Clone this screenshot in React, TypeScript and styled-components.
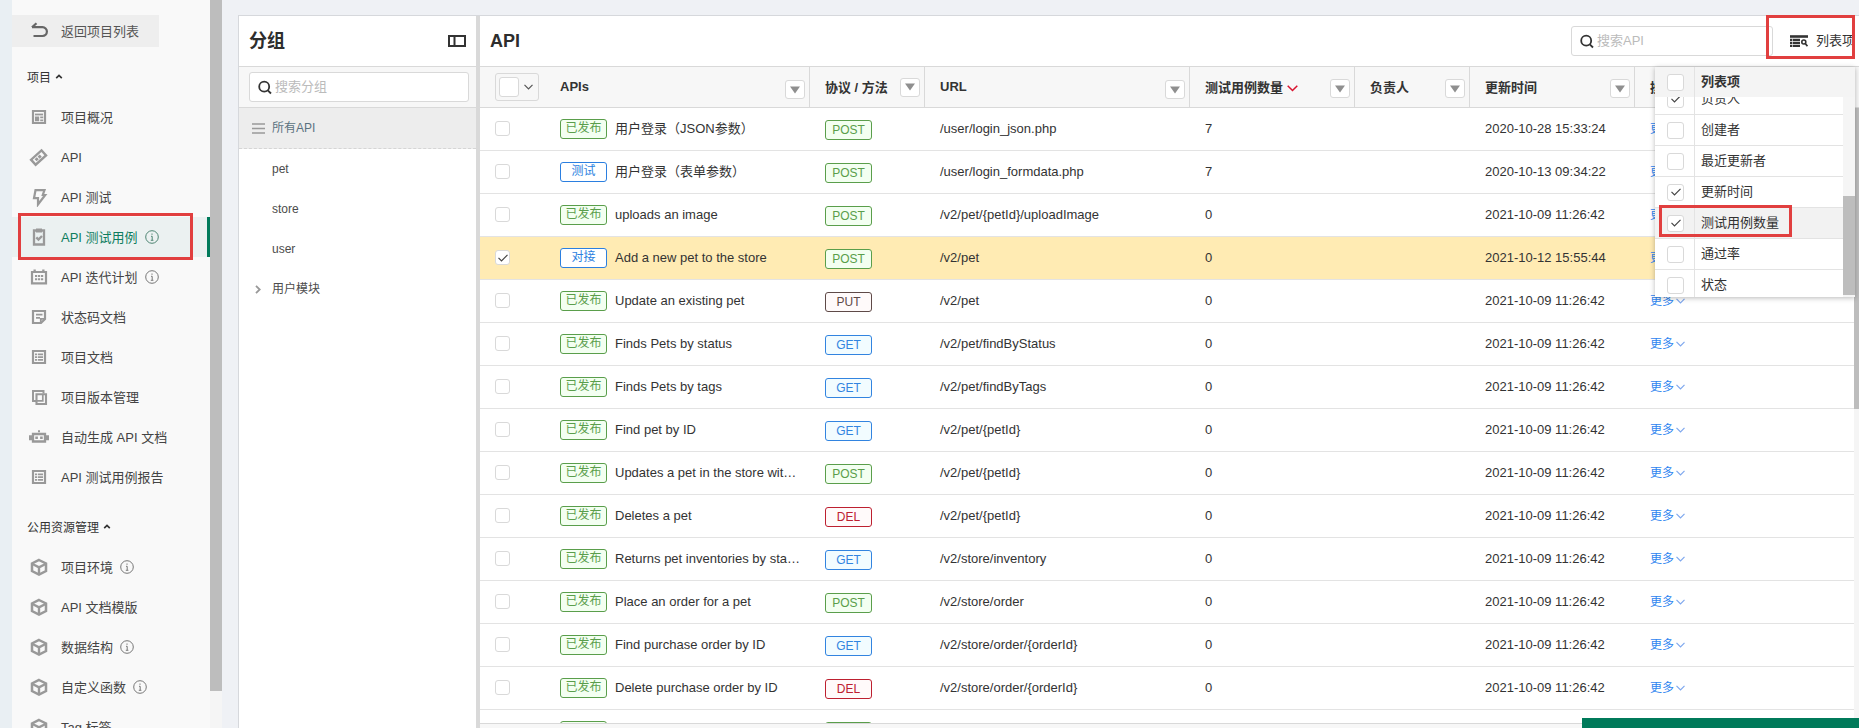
import React from "react";
import styled, { createGlobalStyle, css } from "styled-components";

const GlobalStyle = createGlobalStyle`
  *, *::before, *::after { box-sizing: border-box; }
  body {
    margin: 0;
    background: #eff1f5;
    color: #333;
    font: 13px/20px "Liberation Sans", "Noto Sans CJK SC", sans-serif;
  }
`;

/* ---------- shell ---------- */

const Shell = styled.div`
  position: relative;
  display: flex;
  width: 1859px;
  height: 728px;
  overflow: hidden;
`;

const Rail = styled.div`
  flex: 0 0 12px;
  background: #e9eff3;
`;

const Sidebar = styled.nav`
  flex: 0 0 198px;
  height: 728px;
  overflow: hidden;
  background: #f9f9f9;
  padding-top: 15px;
`;

const SidebarTrack = styled.div`
  flex: 0 0 12px;
  background: #f5f5f5;
`;

const SidebarThumb = styled.div`
  height: 691px;
  background: #bdbdbd;
`;

const Workspace = styled.div`
  flex: 1;
  min-width: 0;
  display: flex;
  margin: 15px 0 0 16px;
  border-top: 1px solid #d6d8dc;
  border-left: 1px solid #d6d8dc;
  background: #fff;
`;

/* ---------- sidebar ---------- */

const BackButton = styled.div`
  display: flex;
  align-items: center;
  width: 147px;
  height: 32px;
  margin-bottom: 10px;
  padding: 1px 0 0 18px;
  background: #eeeeee;
  color: #555;
`;

const SectionTitle = styled.div<{ $spaced?: boolean }>`
  display: flex;
  align-items: center;
  gap: 4px;
  height: 40px;
  padding: 1px 0 0 15px;
  margin-top: ${(p) => (p.$spaced ? 10 : 0)}px;
  font-size: 12px;

  svg {
    margin-top: -3px;
  }
`;

const NavIcon = styled.span<{ $dark?: boolean }>`
  display: flex;
  justify-content: center;
  flex: 0 0 22px;
  margin: -1px 11px 0 -2px;
  color: ${(p) => (p.$dark ? "#666" : "#999")};
`;

const NavItem = styled.div<{ $active?: boolean }>`
  display: flex;
  align-items: center;
  height: 40px;
  padding: 1px 0 0 18px;
  color: #444;
  ${(p) =>
    p.$active &&
    css`
      background: #ebf1f1;
      border-right: 3px solid #007a5a;
      color: #0f7d5f;
    `}
`;

const InfoSlot = styled.span<{ $active?: boolean }>`
  display: flex;
  margin: -2px 0 0 7px;
  color: ${(p) => (p.$active ? "#4f8573" : "#777")};
`;

/* ---------- group panel ---------- */

const GroupPanel = styled.section`
  flex: 0 0 237px;
`;

const PanelHeader = styled.header`
  display: flex;
  align-items: center;
  justify-content: space-between;
  height: 51px;
  padding: 0 10px;
  border-bottom: 1px solid #d9d9d9;
`;

const PanelTitle = styled.h1`
  margin: 0;
  font-size: 18px;
  font-weight: bold;
  line-height: 24px;
  color: #2d2d2d;
`;

const GroupSearchBar = styled.div`
  display: flex;
  align-items: center;
  height: 41px;
  padding: 0 7px 0 10px;
  background: #f7f7f7;
  border-bottom: 1px solid #d9d9d9;
`;

const SearchBox = styled.div<{ $width?: number }>`
  display: flex;
  align-items: center;
  gap: 3px;
  width: ${(p) => (p.$width ? `${p.$width}px` : "100%")};
  height: 30px;
  padding-left: 8px;
  border: 1px solid #d9d9d9;
  border-radius: 3px;
  background: #fff;
  color: #bbb;
`;

const GroupRow = styled.div<{ $selected?: boolean }>`
  display: flex;
  align-items: center;
  height: ${(p) => (p.$selected ? 41 : 40)}px;
  padding-left: 11px;
  font-size: 12px;
  color: #4c4c4c;
  ${(p) =>
    p.$selected &&
    css`
      background: #ededed;
      border-bottom: 1px dashed #d5d5d5;
      color: #5b7280;
    `}
`;

const GroupMark = styled.span`
  display: flex;
  justify-content: center;
  width: 16px;
  margin-right: 6px;
`;

const Divider = styled.div`
  flex: 0 0 4px;
  background: #d9d9d9;
`;

/* ---------- main panel ---------- */

const MainPanel = styled.section`
  flex: 1;
  min-width: 0;
  display: flex;
  flex-direction: column;
`;

const Tools = styled.div`
  display: flex;
  align-items: center;
  margin-right: -10px;
  gap: 17px;
`;

const ColumnsButton = styled.div`
  display: flex;
  align-items: center;
  gap: 8px;
  width: 69px;
  white-space: nowrap;
`;

const columns = css`
  display: grid;
  grid-template-columns: 65px 265px 115px 265px 165px 115px 165px 1fr;
`;

const TableHead = styled.div`
  ${columns}
  height: 41px;
  background: #f7f7f7;
  border-bottom: 1px solid #d9d9d9;
`;

const HeadCell = styled.div<{ $line?: boolean; $drop?: number }>`
  display: flex;
  align-items: center;
  padding: ${(p) => p.$drop ?? 0}px 4px 0 15px;
  border-right: ${(p) => (p.$line ? "1px solid #d9d9d9" : "0")};
  font-weight: bold;
  color: #333;
  white-space: nowrap;
`;

const FilterButton = styled.span<{ $shift: number }>`
  display: flex;
  align-items: center;
  justify-content: center;
  width: 20px;
  height: 19px;
  margin: ${(p) => p.$shift}px 0 0 auto;
  border: 1px solid #d9d9d9;
  border-radius: 3px;
  background: #fff;
`;

const SelectAll = styled.span`
  display: flex;
  align-items: center;
  flex: 0 0 44px;
  gap: 5px;
  height: 28px;
  padding-left: 3px;
  border: 1px solid #d9d9d9;
  border-radius: 3px;
`;

const Check = styled.span<{ $size: number }>`
  display: flex;
  align-items: center;
  justify-content: center;
  flex: none;
  width: ${(p) => p.$size}px;
  height: ${(p) => p.$size}px;
  border: 1px solid #d9d9d9;
  border-radius: 3px;
  background: #fff;
`;

const TableArea = styled.div`
  display: flex;
  height: 616px;
  overflow: hidden;
  border-bottom: 1px solid #d9d9d9;
`;

const TableBody = styled.div`
  flex: 1;
  min-width: 0;
`;

const BodyTrack = styled.div`
  flex: 0 0 5px;
  background: #f5f5f5;
`;

const BodyThumb = styled.div`
  height: 301px;
  background: #bdbdbd;
`;

const Row = styled.div<{ $selected?: boolean }>`
  ${columns}
  height: 43px;
  border-bottom: 1px solid #e3e3e3;
  background: ${(p) => (p.$selected ? "#ffebb3" : "#fff")};
`;

const Cell = styled.div<{ $drop?: number }>`
  display: flex;
  align-items: center;
  min-width: 0;
  padding: ${(p) => p.$drop ?? 0}px 8px 1px 15px;
  white-space: nowrap;
`;

const Name = styled.span`
  margin-left: 8px;
`;

const tones = {
  green: ["#5a9e4b", "#f3fff1"],
  blue: ["#3284e0", "#f2fcff"],
  plainBlue: ["#2b7fe0", "#ffffff"],
  red: ["#bd2030", "#fffafa"],
  brown: ["#5f4a48", "#fffafa"],
};

type Tone = keyof typeof tones;

const Tag = styled.span<{ $tone: Tone; $method?: boolean }>`
  flex: 0 0 47px;
  height: 20px;
  border: 1px solid ${(p) => tones[p.$tone][0]};
  border-radius: 3px;
  background: ${(p) => tones[p.$tone][1]};
  color: ${(p) => tones[p.$tone][0]};
  font-size: 12px;
  line-height: ${(p) => (p.$method ? 19 : 17)}px;
  text-align: center;
`;

const More = styled.span`
  display: flex;
  align-items: center;
  gap: 2px;
  font-size: 12px;
  color: #2f86f0;
`;

const TableFooter = styled.div`
  flex: 1;
  background: #f7f7f7;
`;

/* ---------- floating layers ---------- */

const ColumnMenu = styled.div`
  position: absolute;
  left: 1655px;
  top: 67px;
  width: 200px;
  height: 230px;
  background: #fff;
  box-shadow: 0 1px 5px rgba(0, 0, 0, 0.28);
`;

const MenuRow = styled.div<{ $tint?: boolean }>`
  display: grid;
  grid-template-columns: 40px 1fr;
  height: 31px;
  border-bottom: 1px solid #e3e3e3;
  background: ${(p) => (p.$tint ? "#f2f2f2" : "#fff")};
`;

const MenuHeader = styled(MenuRow)`
  height: 30px;
  border: 0;
  background: #f4f4f4;
  font-weight: bold;
`;

const MenuCell = styled.div<{ $mark?: boolean }>`
  display: flex;
  align-items: center;
  padding-left: ${(p) => (p.$mark ? 12 : 6)}px;
  border-right: ${(p) => (p.$mark ? "1px solid #e3e3e3" : "0")};
`;

const MenuScroll = styled.div`
  display: flex;
  height: 200px;
  overflow: hidden;
`;

const MenuList = styled.div`
  flex: 1;
  margin-top: -13px;
`;

const MenuTrack = styled.div`
  flex: 0 0 12px;
  padding-top: 99px;
  background: #f5f5f5;
`;

const MenuThumb = styled.div`
  height: 99px;
  background: #bdbdbd;
`;

const Highlight = styled.div<{ $x: number; $y: number; $w: number; $h: number }>`
  position: absolute;
  left: ${(p) => p.$x}px;
  top: ${(p) => p.$y}px;
  width: ${(p) => p.$w}px;
  height: ${(p) => p.$h}px;
  border: 3px solid #e13f3f;
`;

const HelpBar = styled.div`
  position: absolute;
  right: 0;
  bottom: 0;
  width: 277px;
  height: 10px;
  background: #007a5a;
`;

/* ---------- icons ---------- */

const Svg = ({ w = 20, h = 20, children }: { w?: number; h?: number; children: React.ReactNode }) => (
  <svg width={w} height={h} viewBox={`0 0 ${w} ${h}`} fill="none" stroke="currentColor" strokeWidth={2}>
    {children}
  </svg>
);

const icons = {
  back: (
    <Svg>
      <path d="M3 6.200h10.500a4.400 4.400 0 0 1 0 8.800H4.500" strokeWidth={2.200} />
      <path d="M7.500 2.200 3 6.200" strokeWidth={2.200} />
    </Svg>
  ),
  overview: (
    <Svg>
      <path d="M4 4h12v12H4z" strokeWidth={2.200} />
      <path d="M6 7.500h8" strokeWidth={1.800} />
      <path d="M6 9.500h4.200v4.700H6zM11.200 9.500h3v1.800h-3zM11.200 12.400h3v1.800h-3z" fill="currentColor" stroke="none" />
    </Svg>
  ),
  api: (
    <Svg>
      <g transform="rotate(-42 9.500 10.500)">
        <path d="M2.500 7.200h14v6.800h-14z" strokeWidth={2.400} />
        <path d="M5.500 10.600h4M9.500 10.600h4" strokeWidth={3} strokeDasharray="3 1" />
      </g>
    </Svg>
  ),
  test: (
    <Svg>
      <path d="M6.500 3.200h9l-1.700 4.800h2.400L9 17.500V11.200H5z" strokeWidth={2.200} />
    </Svg>
  ),
  testcase: (
    <Svg>
      <path d="M5 3.500h10v14H5z" strokeWidth={2.300} />
      <path d="M7 1.500h6v4H7z" fill="currentColor" stroke="none" />
      <path d="m7.300 10.300 2.200 2.200 3.500-3.500" strokeWidth={2.400} />
    </Svg>
  ),
  plan: (
    <Svg>
      <path d="M3 5h14v11.300H3z" strokeWidth={2.200} />
      <path d="M4.500 3.300h2.300M13.200 3.300h2.300" strokeWidth={1.600} />
      <path d="M6 9h2.200M9 9h2.200M12 9h2.200M6 12.200h2.200M9 12.200h2.200M12 12.200h2.200" />
    </Svg>
  ),
  note: (
    <Svg>
      <path d="M4 4h12v8l-4 4H4z" strokeWidth={2.200} />
      <path d="M7 7.700h6.500M7 10.800h4M11.800 16v-4.200H16" strokeWidth={1.800} />
    </Svg>
  ),
  doc: (
    <Svg>
      <path d="M4 4h12v12H4z" strokeWidth={2.200} />
      <path d="M6 7.300h2M8.800 7.300H14M6 10.100h2M8.800 10.100H14M6 12.900h2M8.800 12.900H14" strokeWidth={1.700} />
    </Svg>
  ),
  version: (
    <Svg>
      <path d="M7 14H4V4h10.500v2.500" />
      <path d="M7.500 7.200H17V17H7.500z" strokeWidth={2.100} />
      <path d="M13.800 8v5.800H8" strokeWidth={1.700} />
    </Svg>
  ),
  robot: (
    <Svg>
      <path d="M4 7h12v7.500H4z" strokeWidth={2.300} />
      <path d="M1.500 8.200v5M18.500 8.200v5" strokeWidth={3} />
      <path d="M6.300 10.800h2.600M11.100 10.800h2.600" strokeWidth={2.600} />
      <path d="M10 3.200v2" />
    </Svg>
  ),
  cube: (
    <Svg>
      <path d="m10 3 7 3.500v7.500l-7 3.500L3 14V6.500z" strokeWidth={2.500} />
      <path d="m3.500 7 6.500 3.300L16.500 7M10 10.300V17" strokeWidth={2.400} />
    </Svg>
  ),
};

const InfoIcon = () => (
  <Svg w={14} h={14}>
    <circle cx="7" cy="7" r="6.300" strokeWidth={1} />
    <path d="M7 3.500v1.300M6 6.300h1.200V10M5.800 10.300h2.600" strokeWidth={1} />
  </Svg>
);

const CaretUp = () => (
  <Svg w={8} h={5}>
    <path d="M1.200 4.200 4 1.500l2.800 2.700" strokeWidth={1.700} />
  </Svg>
);

const SearchIcon = () => (
  <svg width="14" height="15" viewBox="0 0 14 15" fill="none" stroke="#333" strokeWidth="1.800">
    <circle cx="6.200" cy="6.700" r="5" />
    <path d="m9.800 10.300 3.200 3.200" />
  </svg>
);

const SidebarToggle = () => (
  <Svg w={18} h={12}>
    <path d="M1 1h16v10H1zM6.500 1v10" />
  </Svg>
);

const ListIcon = () => (
  <svg width="18" height="12" viewBox="0 0 18 12" fill="none" stroke="#333">
    <path d="M0 1.500h18" strokeWidth="2.600" />
    <path d="M0 4.800h10M0 7.800h10M0 10.800h10" strokeWidth="2.200" />
    <path d="M2.500 3.500v8.500" stroke="#fff" strokeWidth="0.600" />
    <circle cx="13.800" cy="7" r="2" strokeWidth="1.600" />
    <path d="m15.200 8.500 2.300 2.700" strokeWidth="1.800" />
  </svg>
);

const Chevron = ({ color = "#555" }: { color?: string }) => (
  <svg width="9" height="6" viewBox="0 0 9 6" fill="none" stroke={color} strokeWidth="1.200">
    <path d="m0.500 0.800 4 4 4-4" />
  </svg>
);

const SortMark = () => (
  <svg width="11" height="7" viewBox="0 0 11 7" fill="none" stroke="#d9122e" strokeWidth="1.500">
    <path d="m0.700 0.700 4.800 4.800 4.800-4.800" />
  </svg>
);

const Triangle = () => (
  <svg width="10" height="8" viewBox="0 0 10 8">
    <path d="M0 0.500h10L5 7.500z" fill="#8f8f8f" />
  </svg>
);

const Tick = () => (
  <svg width="10" height="8" viewBox="0 0 10 8" fill="none" stroke="#444" strokeWidth="1.200">
    <path d="m0.500 3.800 3 3 6-6" />
  </svg>
);

/* ---------- data ---------- */

type NavEntry = { icon: keyof typeof icons; label: string; info?: boolean; active?: boolean };

const projectNav: NavEntry[] = [
  { icon: "overview", label: "项目概况" },
  { icon: "api", label: "API" },
  { icon: "test", label: "API 测试" },
  { icon: "testcase", label: "API 测试用例", info: true, active: true },
  { icon: "plan", label: "API 迭代计划", info: true },
  { icon: "note", label: "状态码文档" },
  { icon: "doc", label: "项目文档" },
  { icon: "version", label: "项目版本管理" },
  { icon: "robot", label: "自动生成 API 文档" },
  { icon: "doc", label: "API 测试用例报告" },
];

const resourceNav: NavEntry[] = [
  { icon: "cube", label: "项目环境", info: true },
  { icon: "cube", label: "API 文档模版" },
  { icon: "cube", label: "数据结构", info: true },
  { icon: "cube", label: "自定义函数", info: true },
  { icon: "cube", label: "Tag 标签" },
];

const headings: { label: string; shift: number; drop?: number; sorted?: boolean }[] = [
  { label: "APIs", shift: 5 },
  { label: "协议 / 方法", shift: -2, drop: 2 },
  { label: "URL", shift: 5 },
  { label: "测试用例数量", shift: 1, drop: 2, sorted: true },
  { label: "负责人", shift: 1, drop: 2 },
  { label: "更新时间", shift: 1, drop: 2 },
];

const methodTone: Record<string, Tone> = { POST: "green", GET: "blue", PUT: "brown", DEL: "red" };

const DEFAULT_TIME = "2021-10-09 11:26:42";

type Api = [status: string, name: string, method: string, url: string, cases: number, time?: string];

const apis: Api[] = [
  ["已发布", "用户登录（JSON参数）", "POST", "/user/login_json.php", 7, "2020-10-28 15:33:24"],
  ["测试", "用户登录（表单参数）", "POST", "/user/login_formdata.php", 7, "2020-10-13 09:34:22"],
  ["已发布", "uploads an image", "POST", "/v2/pet/{petId}/uploadImage", 0],
  ["对接", "Add a new pet to the store", "POST", "/v2/pet", 0, "2021-10-12 15:55:44"],
  ["已发布", "Update an existing pet", "PUT", "/v2/pet", 0],
  ["已发布", "Finds Pets by status", "GET", "/v2/pet/findByStatus", 0],
  ["已发布", "Finds Pets by tags", "GET", "/v2/pet/findByTags", 0],
  ["已发布", "Find pet by ID", "GET", "/v2/pet/{petId}", 0],
  ["已发布", "Updates a pet in the store wit…", "POST", "/v2/pet/{petId}", 0],
  ["已发布", "Deletes a pet", "DEL", "/v2/pet/{petId}", 0],
  ["已发布", "Returns pet inventories by sta…", "GET", "/v2/store/inventory", 0],
  ["已发布", "Place an order for a pet", "POST", "/v2/store/order", 0],
  ["已发布", "Find purchase order by ID", "GET", "/v2/store/order/{orderId}", 0],
  ["已发布", "Delete purchase order by ID", "DEL", "/v2/store/order/{orderId}", 0],
  ["已发布", "Create user", "POST", "/v2/user", 0],
];

const menuItems: { label: string; on?: boolean; tint?: boolean }[] = [
  { label: "负责人", on: true },
  { label: "创建者" },
  { label: "最近更新者" },
  { label: "更新时间", on: true },
  { label: "测试用例数量", on: true, tint: true },
  { label: "通过率" },
  { label: "状态" },
];

/* ---------- composition ---------- */

const NavGroup = ({ items }: { items: NavEntry[] }) => (
  <>
    {items.map((item) => (
      <NavItem key={item.label} $active={item.active}>
        <NavIcon>{icons[item.icon]}</NavIcon>
        {item.label}
        {item.info && (
          <InfoSlot $active={item.active}>
            <InfoIcon />
          </InfoSlot>
        )}
      </NavItem>
    ))}
  </>
);

const ApiRow = ({ api }: { api: Api }) => {
  const [status, name, method, url, cases, time = DEFAULT_TIME] = api;
  const selected = status === "对接";
  return (
    <Row $selected={selected}>
      <Cell>
        <Check $size={15}>{selected && <Tick />}</Check>
      </Cell>
      <Cell>
        <Tag $tone={status === "已发布" ? "green" : "plainBlue"}>{status}</Tag>
        <Name>{name}</Name>
      </Cell>
      <Cell $drop={3}>
        <Tag $method $tone={methodTone[method]}>
          {method}
        </Tag>
      </Cell>
      <Cell>{url}</Cell>
      <Cell $drop={1}>{cases}</Cell>
      <Cell />
      <Cell $drop={1}>{time}</Cell>
      <Cell $drop={1}>
        <More>
          更多
          <Chevron color="#7fa8ee" />
        </More>
      </Cell>
    </Row>
  );
};

export default function App() {
  return (
    <>
      <GlobalStyle />
      <Shell>
        <Rail />
        <Sidebar>
          <BackButton>
            <NavIcon $dark>{icons.back}</NavIcon>
            返回项目列表
          </BackButton>
          <SectionTitle>
            项目
            <CaretUp />
          </SectionTitle>
          <NavGroup items={projectNav} />
          <SectionTitle $spaced>
            公用资源管理
            <CaretUp />
          </SectionTitle>
          <NavGroup items={resourceNav} />
        </Sidebar>
        <SidebarTrack>
          <SidebarThumb />
        </SidebarTrack>

        <Workspace>
          <GroupPanel>
            <PanelHeader>
              <PanelTitle>分组</PanelTitle>
              <SidebarToggle />
            </PanelHeader>
            <GroupSearchBar>
              <SearchBox>
                <SearchIcon />
                搜索分组
              </SearchBox>
            </GroupSearchBar>
            <GroupRow $selected>
              <GroupMark>
                <svg width="13" height="11" viewBox="0 0 13 11" stroke="#999" strokeWidth="1.300">
                  <path d="M0 1h13M0 5.500h13M0 10h13" />
                </svg>
              </GroupMark>
              所有API
            </GroupRow>
            {["pet", "store", "user"].map((g) => (
              <GroupRow key={g}>
                <GroupMark />
                {g}
              </GroupRow>
            ))}
            <GroupRow>
              <GroupMark>
                <svg width="6" height="9" viewBox="0 0 6 9" fill="none" stroke="#999" strokeWidth="1.800">
                  <path d="m1 0.800 3.700 3.700L1 8.200" />
                </svg>
              </GroupMark>
              用户模块
            </GroupRow>
          </GroupPanel>
          <Divider />
          <MainPanel>
            <PanelHeader>
              <PanelTitle>API</PanelTitle>
              <Tools>
                <SearchBox $width={202}>
                  <SearchIcon />
                  搜索API
                </SearchBox>
                <ColumnsButton>
                  <ListIcon />
                  列表项
                </ColumnsButton>
              </Tools>
            </PanelHeader>
            <TableHead>
              <HeadCell>
                <SelectAll>
                  <Check $size={20} />
                  <Chevron />
                </SelectAll>
              </HeadCell>
              {headings.map((h) => (
                <HeadCell key={h.label} $line $drop={h.drop}>
                  {h.label}
                  {h.sorted && <>&nbsp;<SortMark /></>}
                  <FilterButton $shift={h.shift}>
                    <Triangle />
                  </FilterButton>
                </HeadCell>
              ))}
              <HeadCell $drop={2}>操作</HeadCell>
            </TableHead>
            <TableArea>
              <TableBody>
                {apis.map((api) => (
                  <ApiRow key={api[1]} api={api} />
                ))}
              </TableBody>
              <BodyTrack>
                <BodyThumb />
              </BodyTrack>
            </TableArea>
            <TableFooter />
          </MainPanel>
        </Workspace>

        <ColumnMenu>
          <MenuHeader>
            <MenuCell $mark>
              <Check $size={17} />
            </MenuCell>
            <MenuCell>列表项</MenuCell>
          </MenuHeader>
          <MenuScroll>
            <MenuList>
              {menuItems.map((m) => (
                <MenuRow key={m.label} $tint={m.tint}>
                  <MenuCell $mark>
                    <Check $size={17}>{m.on && <Tick />}</Check>
                  </MenuCell>
                  <MenuCell>{m.label}</MenuCell>
                </MenuRow>
              ))}
            </MenuList>
            <MenuTrack>
              <MenuThumb />
            </MenuTrack>
          </MenuScroll>
        </ColumnMenu>

        <Highlight $x={18} $y={213} $w={175} $h={47} />
        <Highlight $x={1766} $y={15} $w={89} $h={44} />
        <Highlight $x={1659} $y={205} $w={133} $h={32} />
        <HelpBar />
      </Shell>
    </>
  );
}
